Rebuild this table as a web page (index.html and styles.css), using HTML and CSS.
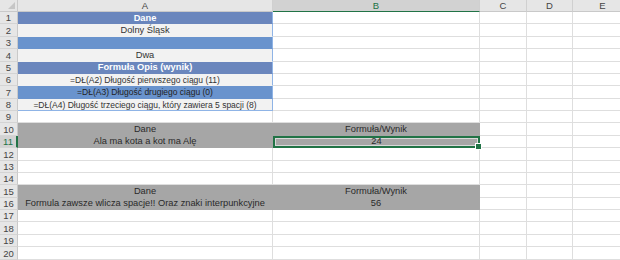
FILE: index.html
```html
<!DOCTYPE html>
<html>
<head>
  <meta charset="utf-8">
  <link rel="stylesheet" href="styles.css">
</head>
<body>
  <div class="sheet">
    <!-- naglowki kolumn -->
    <div class="corner"></div>
    <div class="colhead">A</div>
    <div class="colhead active">B</div>
    <div class="colhead">C</div>
    <div class="colhead">D</div>
    <div class="colhead">E</div>

    <div class="rowhead">1</div>
    <div class="cell blue-dark bold boxed">Dane</div>
    <div class="cell"></div><div class="cell"></div><div class="cell"></div><div class="cell"></div>

    <div class="rowhead">2</div>
    <div class="cell light boxed">Dolny Śląsk</div>
    <div class="cell"></div><div class="cell"></div><div class="cell"></div><div class="cell"></div>

    <div class="rowhead">3</div>
    <div class="cell blue boxed"></div>
    <div class="cell"></div><div class="cell"></div><div class="cell"></div><div class="cell"></div>

    <div class="rowhead">4</div>
    <div class="cell light boxed">Dwa</div>
    <div class="cell"></div><div class="cell"></div><div class="cell"></div><div class="cell"></div>

    <div class="rowhead">5</div>
    <div class="cell blue-dark bold boxed">Formuła Opis (wynik)</div>
    <div class="cell"></div><div class="cell"></div><div class="cell"></div><div class="cell"></div>

    <div class="rowhead">6</div>
    <div class="cell light boxed small">=DŁ(A2) Długość pierwszego ciągu (11)</div>
    <div class="cell"></div><div class="cell"></div><div class="cell"></div><div class="cell"></div>

    <div class="rowhead">7</div>
    <div class="cell blue boxed small">=DŁ(A3) Długość drugiego ciągu (0)</div>
    <div class="cell"></div><div class="cell"></div><div class="cell"></div><div class="cell"></div>

    <div class="rowhead">8</div>
    <div class="cell light boxed small last">=DŁ(A4) Długość trzeciego ciągu, który zawiera 5 spacji (8)</div>
    <div class="cell"></div><div class="cell"></div><div class="cell"></div><div class="cell"></div>

    <div class="rowhead">9</div>
    <div class="cell"></div><div class="cell"></div><div class="cell"></div><div class="cell"></div><div class="cell"></div>

    <div class="rowhead">10</div>
    <div class="cell gray">Dane</div>
    <div class="cell gray">Formuła/Wynik</div>
    <div class="cell"></div><div class="cell"></div><div class="cell"></div>

    <div class="rowhead active">11</div>
    <div class="cell gray">Ala ma kota a kot ma Alę</div>
    <div class="cell gray selected">24<span class="handle"></span></div>
    <div class="cell"></div><div class="cell"></div><div class="cell"></div>

    <div class="rowhead">12</div>
    <div class="cell"></div><div class="cell"></div><div class="cell"></div><div class="cell"></div><div class="cell"></div>
    <div class="rowhead">13</div>
    <div class="cell"></div><div class="cell"></div><div class="cell"></div><div class="cell"></div><div class="cell"></div>
    <div class="rowhead">14</div>
    <div class="cell"></div><div class="cell"></div><div class="cell"></div><div class="cell"></div><div class="cell"></div>

    <div class="rowhead">15</div>
    <div class="cell gray">Dane</div>
    <div class="cell gray">Formuła/Wynik</div>
    <div class="cell"></div><div class="cell"></div><div class="cell"></div>

    <div class="rowhead">16</div>
    <div class="cell gray">Formula zawsze wlicza spacje!! Oraz znaki interpunkcyjne</div>
    <div class="cell gray">56</div>
    <div class="cell"></div><div class="cell"></div><div class="cell"></div>

    <div class="rowhead">17</div>
    <div class="cell"></div><div class="cell"></div><div class="cell"></div><div class="cell"></div><div class="cell"></div>
    <div class="rowhead">18</div>
    <div class="cell"></div><div class="cell"></div><div class="cell"></div><div class="cell"></div><div class="cell"></div>
    <div class="rowhead">19</div>
    <div class="cell"></div><div class="cell"></div><div class="cell"></div><div class="cell"></div><div class="cell"></div>
    <div class="rowhead">20</div>
    <div class="cell"></div><div class="cell"></div><div class="cell"></div><div class="cell"></div><div class="cell"></div>
  </div>
</body>
</html>
```

FILE: styles.css
```css
body {
  margin: 0;
  background-color: #fff;
  font-family: "Liberation Sans", Arial, sans-serif;
  font-size: 9.3px;
  color: #333;
  overflow: hidden;
}

.sheet {
  display: grid;
  grid-template-columns: 18px 255px 207px 47px 46px 60px;
  grid-template-rows: 12px;
  grid-auto-rows: 12.375px;
  width: 633px;
}

.sheet > div {
  box-sizing: border-box;
  display: flex;
  align-items: center;
  justify-content: center;
  white-space: nowrap;
  overflow: hidden;
  line-height: 1;
  padding-top: 1px;
}

.corner {
  position: relative;
  background-color: #e6e6e6;
  border-right: 1px solid #c9c9c9;
  border-bottom: 1px solid #c9c9c9;
}

.corner::after {
  content: '';
  position: absolute;
  right: 2px;
  bottom: 2px;
  border-left: 7px solid transparent;
  border-bottom: 7px solid #c6c6c6;
}

.colhead {
  background-color: #e6e6e6;
  color: #444;
  font-size: 9.5px;
  border-right: 1px solid #d0d0d0;
  border-bottom: 1px solid #c9c9c9;
}

.colhead.active {
  background-color: #d2d2d2;
  color: #217346;
  border-bottom: 1px solid #217346;
}

.rowhead {
  background-color: #e6e6e6;
  color: #444;
  font-size: 9.5px;
  border-right: 1px solid #c9c9c9;
  border-bottom: 1px solid #d4d4d4;
}

.rowhead.active {
  background-color: #d2d2d2;
  color: #217346;
  border-right: 2px solid #217346;
}

.cell {
  border-right: 1px solid #dedede;
  border-bottom: 1px solid #dedede;
}

.cell.small {
  font-size: 8.5px;
}

.cell.bold {
  font-weight: bold;
  color: #fff;
}

.cell.blue-dark {
  background-color: #6a86bd;
  border-bottom-color: #6a86bd;
}

.cell.blue {
  background-color: #6993cd;
  border-bottom-color: #6993cd;
  color: #222;
}

.cell.light {
  background-color: #f2f2f2;
  border-bottom-color: #f2f2f2;
}

/* ramka wokol tabeli A1:A8 */
.cell.boxed {
  border-right: 1px solid #8fb4e6;
}

.cell.boxed.last {
  border-bottom: 1px solid #8fb4e6;
}

.cell.gray {
  background-color: #a6a6a6;
  border-color: #a6a6a6;
  color: #2a2a2a;
}

.cell.selected {
  position: relative;
  overflow: visible;
  border: 2px solid #217346;
  box-shadow: inset 0 0 0 1px #d8d8d8;
  padding-top: 0;
}

.handle {
  position: absolute;
  right: -4px;
  bottom: -4px;
  width: 5px;
  height: 5px;
  background-color: #217346;
  border: 1px solid #fff;
}
```
